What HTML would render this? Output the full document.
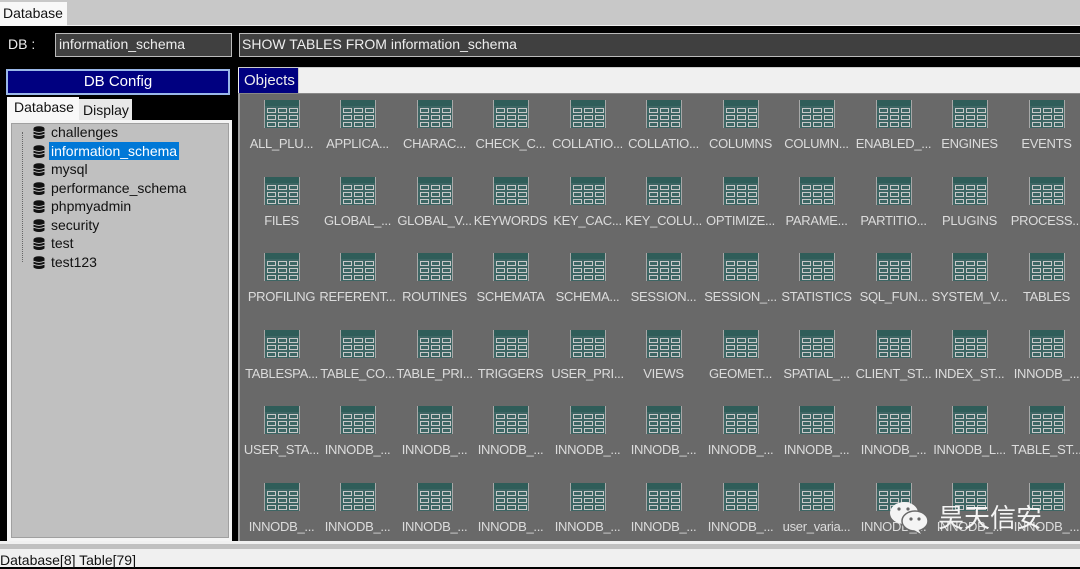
<!DOCTYPE html>
<html><head><meta charset="utf-8">
<style>
*{margin:0;padding:0;box-sizing:border-box}
body{width:1080px;height:567px;overflow:hidden;background:#000;font-family:"Liberation Sans","Noto Sans CJK SC",sans-serif;font-size:14px;position:relative}
.abs{position:absolute}
.cell{position:absolute;width:77px;text-align:center;color:#dcdcdc;font-size:13px;letter-spacing:-0.3px;white-space:nowrap}
.cell svg{display:block;margin:0 auto 8px auto}
.tree div{position:absolute;left:40px;height:18px;line-height:18px;color:#111;font-size:14px}
.tree .ic{position:absolute;left:-17px;top:3px;width:12px;height:13px}
</style></head><body>
<svg width="0" height="0" style="position:absolute">
<defs>
<symbol id="t" viewBox="0 0 36 28">
<rect x="0" y="0" width="36" height="28" fill="#3d6664"/>
<rect x="0" y="0" width="36" height="6" fill="#2f5d59"/>
<rect x="0" y="0" width="1" height="28" fill="#a8a8a8"/>
<rect x="35" y="0" width="1" height="28" fill="#a8a8a8"/>
<g fill="none" stroke="#c8c8c8" stroke-width="1">
<rect x="3.5" y="8.5" width="8" height="4"/><rect x="14.5" y="8.5" width="8" height="4"/><rect x="25.5" y="8.5" width="8" height="4"/>
<rect x="3.5" y="15.5" width="8" height="4"/><rect x="14.5" y="15.5" width="8" height="4"/><rect x="25.5" y="15.5" width="8" height="4"/>
<rect x="3.5" y="22.5" width="8" height="4"/><rect x="14.5" y="22.5" width="8" height="4"/><rect x="25.5" y="22.5" width="8" height="4"/>
</g>
</symbol>
<symbol id="d" viewBox="0 0 12 13">
<ellipse cx="6" cy="2.5" rx="5.5" ry="2.3" fill="#111"/>
<rect x="0.5" y="2.5" width="11" height="9" fill="#111"/>
<ellipse cx="6" cy="11" rx="5.5" ry="2" fill="#111"/>
<path d="M0.5 5.2 Q6 7.6 11.5 5.2 M0.5 8.2 Q6 10.6 11.5 8.2" stroke="#ccc" stroke-width="0.9" fill="none"/>
</symbol>
</defs></svg>

<div class="abs" style="left:0;top:0;width:1080px;height:26px;background:#c8c8c8;border-bottom:1px solid #eee"></div>
<div class="abs" style="left:0;top:2px;width:67px;height:24px;background:#f8f8f8;line-height:22px;padding-left:3px;color:#111">Database</div>

<div class="abs" style="left:8px;top:35px;color:#eee;line-height:18px">DB :</div>
<div class="abs" style="left:55px;top:33px;width:177px;height:24px;background:#404040;border:1px solid #bbb;color:#eee;line-height:20px;padding-left:3px">information_schema</div>
<div class="abs" style="left:239px;top:33px;width:841px;height:24px;background:#404040;border:1px solid #bbb;border-right:none;color:#eee;line-height:20px;padding-left:2px">SHOW TABLES FROM information_schema</div>

<div class="abs" style="left:6px;top:69px;width:224px;height:26px;background:#000080;border:2px solid #9ab8e8;color:#fff;text-align:center;line-height:22px;font-size:15px">DB Config</div>
<div class="abs" style="left:7px;top:97px;width:72px;height:24px;background:#f8f8f8;color:#111;padding-left:7px;line-height:20px">Database</div>
<div class="abs" style="left:79px;top:99px;width:53px;height:22px;background:#e8e8e8;color:#111;padding-left:4px;line-height:22px">Display</div>
<div class="abs" style="left:7px;top:120px;width:225px;height:421px;background:#f4f4f4"></div>
<div class="abs" style="left:11px;top:123px;width:218px;height:415px;background:#c0c0c0;border:1px solid #a0a0a0"></div>
<div class="abs" style="left:22px;top:132px;height:130px;border-left:1px dotted #666"></div>
<div class="tree">
<div style="top:123px;left:51px"><svg class="ic" style="left:-18px"><use href="#d"/></svg>challenges</div>
<div style="top:142px;left:49px;background:#0078d7;color:#fff;padding:0 2px"><svg class="ic" style="left:-16px"><use href="#d"/></svg>information_schema</div>
<div style="top:160px;left:51px"><svg class="ic" style="left:-18px"><use href="#d"/></svg>mysql</div>
<div style="top:179px;left:51px"><svg class="ic" style="left:-18px"><use href="#d"/></svg>performance_schema</div>
<div style="top:197px;left:51px"><svg class="ic" style="left:-18px"><use href="#d"/></svg>phpmyadmin</div>
<div style="top:216px;left:51px"><svg class="ic" style="left:-18px"><use href="#d"/></svg>security</div>
<div style="top:234px;left:51px"><svg class="ic" style="left:-18px"><use href="#d"/></svg>test</div>
<div style="top:253px;left:51px"><svg class="ic" style="left:-18px"><use href="#d"/></svg>test123</div>
</div>

<div class="abs" style="left:238px;top:67px;width:842px;height:26px;background:#f0f0f0;border-top:1px solid #ccc"></div>
<div class="abs" style="left:239px;top:68px;width:60px;height:25px;background:#000080;color:#eee;line-height:26px;padding-left:5px;font-size:15px;border-right:1px solid #ccc">Objects</div>
<div class="abs" style="left:238px;top:93px;width:842px;height:448px;background:#696969;border-left:2px solid #a0a0a0;border-top:1px solid #888"></div>

<div id="grid">
<div class="cell" style="left:243px;top:100px"><svg width="36" height="28"><use href="#t"/></svg>ALL_PLU...</div>
<div class="cell" style="left:319px;top:100px"><svg width="36" height="28"><use href="#t"/></svg>APPLICA...</div>
<div class="cell" style="left:396px;top:100px"><svg width="36" height="28"><use href="#t"/></svg>CHARAC...</div>
<div class="cell" style="left:472px;top:100px"><svg width="36" height="28"><use href="#t"/></svg>CHECK_C...</div>
<div class="cell" style="left:549px;top:100px"><svg width="36" height="28"><use href="#t"/></svg>COLLATIO...</div>
<div class="cell" style="left:625px;top:100px"><svg width="36" height="28"><use href="#t"/></svg>COLLATIO...</div>
<div class="cell" style="left:702px;top:100px"><svg width="36" height="28"><use href="#t"/></svg>COLUMNS</div>
<div class="cell" style="left:778px;top:100px"><svg width="36" height="28"><use href="#t"/></svg>COLUMN...</div>
<div class="cell" style="left:855px;top:100px"><svg width="36" height="28"><use href="#t"/></svg>ENABLED_...</div>
<div class="cell" style="left:931px;top:100px"><svg width="36" height="28"><use href="#t"/></svg>ENGINES</div>
<div class="cell" style="left:1008px;top:100px"><svg width="36" height="28"><use href="#t"/></svg>EVENTS</div>

<div class="cell" style="left:243px;top:177px"><svg width="36" height="28"><use href="#t"/></svg>FILES</div>
<div class="cell" style="left:319px;top:177px"><svg width="36" height="28"><use href="#t"/></svg>GLOBAL_...</div>
<div class="cell" style="left:396px;top:177px"><svg width="36" height="28"><use href="#t"/></svg>GLOBAL_V...</div>
<div class="cell" style="left:472px;top:177px"><svg width="36" height="28"><use href="#t"/></svg>KEYWORDS</div>
<div class="cell" style="left:549px;top:177px"><svg width="36" height="28"><use href="#t"/></svg>KEY_CAC...</div>
<div class="cell" style="left:625px;top:177px"><svg width="36" height="28"><use href="#t"/></svg>KEY_COLU...</div>
<div class="cell" style="left:702px;top:177px"><svg width="36" height="28"><use href="#t"/></svg>OPTIMIZE...</div>
<div class="cell" style="left:778px;top:177px"><svg width="36" height="28"><use href="#t"/></svg>PARAME...</div>
<div class="cell" style="left:855px;top:177px"><svg width="36" height="28"><use href="#t"/></svg>PARTITIO...</div>
<div class="cell" style="left:931px;top:177px"><svg width="36" height="28"><use href="#t"/></svg>PLUGINS</div>
<div class="cell" style="left:1008px;top:177px"><svg width="36" height="28"><use href="#t"/></svg>PROCESS...</div>

<div class="cell" style="left:243px;top:253px"><svg width="36" height="28"><use href="#t"/></svg>PROFILING</div>
<div class="cell" style="left:319px;top:253px"><svg width="36" height="28"><use href="#t"/></svg>REFERENT...</div>
<div class="cell" style="left:396px;top:253px"><svg width="36" height="28"><use href="#t"/></svg>ROUTINES</div>
<div class="cell" style="left:472px;top:253px"><svg width="36" height="28"><use href="#t"/></svg>SCHEMATA</div>
<div class="cell" style="left:549px;top:253px"><svg width="36" height="28"><use href="#t"/></svg>SCHEMA...</div>
<div class="cell" style="left:625px;top:253px"><svg width="36" height="28"><use href="#t"/></svg>SESSION...</div>
<div class="cell" style="left:702px;top:253px"><svg width="36" height="28"><use href="#t"/></svg>SESSION_...</div>
<div class="cell" style="left:778px;top:253px"><svg width="36" height="28"><use href="#t"/></svg>STATISTICS</div>
<div class="cell" style="left:855px;top:253px"><svg width="36" height="28"><use href="#t"/></svg>SQL_FUN...</div>
<div class="cell" style="left:931px;top:253px"><svg width="36" height="28"><use href="#t"/></svg>SYSTEM_V...</div>
<div class="cell" style="left:1008px;top:253px"><svg width="36" height="28"><use href="#t"/></svg>TABLES</div>

<div class="cell" style="left:243px;top:330px"><svg width="36" height="28"><use href="#t"/></svg>TABLESPA...</div>
<div class="cell" style="left:319px;top:330px"><svg width="36" height="28"><use href="#t"/></svg>TABLE_CO...</div>
<div class="cell" style="left:396px;top:330px"><svg width="36" height="28"><use href="#t"/></svg>TABLE_PRI...</div>
<div class="cell" style="left:472px;top:330px"><svg width="36" height="28"><use href="#t"/></svg>TRIGGERS</div>
<div class="cell" style="left:549px;top:330px"><svg width="36" height="28"><use href="#t"/></svg>USER_PRI...</div>
<div class="cell" style="left:625px;top:330px"><svg width="36" height="28"><use href="#t"/></svg>VIEWS</div>
<div class="cell" style="left:702px;top:330px"><svg width="36" height="28"><use href="#t"/></svg>GEOMET...</div>
<div class="cell" style="left:778px;top:330px"><svg width="36" height="28"><use href="#t"/></svg>SPATIAL_...</div>
<div class="cell" style="left:855px;top:330px"><svg width="36" height="28"><use href="#t"/></svg>CLIENT_ST...</div>
<div class="cell" style="left:931px;top:330px"><svg width="36" height="28"><use href="#t"/></svg>INDEX_ST...</div>
<div class="cell" style="left:1008px;top:330px"><svg width="36" height="28"><use href="#t"/></svg>INNODB_...</div>

<div class="cell" style="left:243px;top:406px"><svg width="36" height="28"><use href="#t"/></svg>USER_STA...</div>
<div class="cell" style="left:319px;top:406px"><svg width="36" height="28"><use href="#t"/></svg>INNODB_...</div>
<div class="cell" style="left:396px;top:406px"><svg width="36" height="28"><use href="#t"/></svg>INNODB_...</div>
<div class="cell" style="left:472px;top:406px"><svg width="36" height="28"><use href="#t"/></svg>INNODB_...</div>
<div class="cell" style="left:549px;top:406px"><svg width="36" height="28"><use href="#t"/></svg>INNODB_...</div>
<div class="cell" style="left:625px;top:406px"><svg width="36" height="28"><use href="#t"/></svg>INNODB_...</div>
<div class="cell" style="left:702px;top:406px"><svg width="36" height="28"><use href="#t"/></svg>INNODB_...</div>
<div class="cell" style="left:778px;top:406px"><svg width="36" height="28"><use href="#t"/></svg>INNODB_...</div>
<div class="cell" style="left:855px;top:406px"><svg width="36" height="28"><use href="#t"/></svg>INNODB_...</div>
<div class="cell" style="left:931px;top:406px"><svg width="36" height="28"><use href="#t"/></svg>INNODB_L...</div>
<div class="cell" style="left:1008px;top:406px"><svg width="36" height="28"><use href="#t"/></svg>TABLE_ST...</div>

<div class="cell" style="left:243px;top:483px"><svg width="36" height="28"><use href="#t"/></svg>INNODB_...</div>
<div class="cell" style="left:319px;top:483px"><svg width="36" height="28"><use href="#t"/></svg>INNODB_...</div>
<div class="cell" style="left:396px;top:483px"><svg width="36" height="28"><use href="#t"/></svg>INNODB_...</div>
<div class="cell" style="left:472px;top:483px"><svg width="36" height="28"><use href="#t"/></svg>INNODB_...</div>
<div class="cell" style="left:549px;top:483px"><svg width="36" height="28"><use href="#t"/></svg>INNODB_...</div>
<div class="cell" style="left:625px;top:483px"><svg width="36" height="28"><use href="#t"/></svg>INNODB_...</div>
<div class="cell" style="left:702px;top:483px"><svg width="36" height="28"><use href="#t"/></svg>INNODB_...</div>
<div class="cell" style="left:778px;top:483px"><svg width="36" height="28"><use href="#t"/></svg>user_varia...</div>
<div class="cell" style="left:855px;top:483px"><svg width="36" height="28"><use href="#t"/></svg>INNODB_...</div>
<div class="cell" style="left:931px;top:483px"><svg width="36" height="28"><use href="#t"/></svg>INNODB_...</div>
<div class="cell" style="left:1008px;top:483px"><svg width="36" height="28"><use href="#t"/></svg>INNODB_...</div>
</div>

<svg class="abs" style="left:888px;top:500px" width="44" height="36" viewBox="0 0 44 36">
<ellipse cx="16" cy="13" rx="14" ry="11" fill="#f4f4f4"/>
<ellipse cx="27" cy="21" rx="13" ry="10" fill="#f4f4f4" stroke="#696969" stroke-width="1.5"/>
<path d="M30 29 L33 34 L26 30Z" fill="#f4f4f4"/>
<circle cx="11" cy="9" r="1.6" fill="#666"/><circle cx="20" cy="9" r="1.6" fill="#666"/>
<circle cx="23" cy="19" r="1.6" fill="#666"/><circle cx="31" cy="19" r="1.6" fill="#666"/>
</svg>
<div class="abs" style="left:938px;top:502px;color:#f4f4f4;font-size:26px;line-height:30px;font-family:'Noto Sans CJK SC',sans-serif">昊天信安</div>

<div class="abs" style="left:0;top:541px;width:1080px;height:26px;background:#f0f0f0"></div>
<div class="abs" style="left:0;top:544px;width:1080px;height:5px;background:#c0c0c0"></div>
<div class="abs" style="left:0;top:551px;color:#111;line-height:18px">Database[8] Table[79]</div>
</body></html>
